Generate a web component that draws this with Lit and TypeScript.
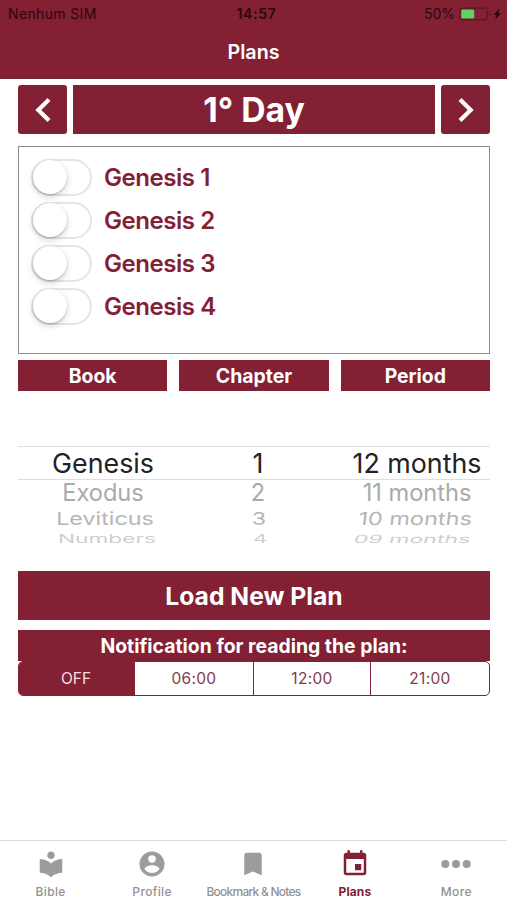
import { LitElement, html, css, svg } from "lit";
import { customElement } from "lit/decorators.js";

const CHAPTERS = ["Genesis 1", "Genesis 2", "Genesis 3", "Genesis 4"];
const WHEEL = [
  ["Genesis", "1", "12 months"],
  ["Exodus", "2", "11 months"],
  ["Leviticus", "3", "10 months"],
  ["Numbers", "4", "09 months"],
];
const TIMES = ["OFF", "06:00", "12:00", "21:00"];
const TABS = [
  { id: "bible", label: "Bible", icon: svg`<path d="M12 11.55C9.64 9.35 6.48 8 3 8v11c3.48 0 6.64 1.35 9 3.55 2.36-2.19 5.52-3.55 9-3.55V8c-3.48 0-6.64 1.35-9 3.55zM12 8c1.66 0 3-1.34 3-3s-1.34-3-3-3-3 1.34-3 3 1.34 3 3 3z"/>` },
  { id: "profile", label: "Profile", icon: svg`<path fill-rule="evenodd" d="M12 2a10 10 0 1 0 0 20 10 10 0 0 0 0-20zm0 3a3 3 0 1 1 0 6 3 3 0 0 1 0-6zm0 14.200c-2.500 0-4.710-1.280-6-3.220.030-1.990 4-3.080 6-3.080s5.970 1.090 6 3.080a7.200 7.200 0 0 1-6 3.220z"/>` },
  { id: "notes", label: "Bookmark & Notes", icon: svg`<path d="M17 3H7c-1.100 0-2 .9-2 2v16l7-3 7 3V5c0-1.100-.9-2-2-2z"/>` },
  { id: "plans", label: "Plans", icon: svg`<path d="M17 12h-5v5h5v-5zM16 1v2H8V1H6v2H5c-1.110 0-2 .9-2 2v14c0 1.100.890 2 2 2h14c1.100 0 2-.9 2-2V5c0-1.100-.9-2-2-2h-1V1h-2zm3 18H5V8h14v11z"/>` },
  { id: "more", label: "More", icon: svg`<circle cx="3.400" cy="12" r="3.200"/><circle cx="12" cy="12" r="3.200"/><circle cx="20.600" cy="12" r="3.200"/>` },
];

@customElement("app-root")
export class AppRoot extends LitElement {
  static styles = css`
    :host { display: flex; flex-direction: column; height: 900px; background: #fff; overflow: hidden;
      font-family: Inter, "Liberation Sans", sans-serif; --wine: #832034; color: var(--wine); }
    * { box-sizing: border-box; }
    .header { flex: none; height: 79px; background: var(--wine); border-bottom: 1px solid #732338; }
    .status { display: grid; grid-template-columns: 1fr auto 1fr; align-items: center; height: 27px;
      padding: 0 5px 0 8px; font-size: 13.5px; color: #2b0710; white-space: nowrap; }
    .carrier { font-size: 14px; letter-spacing: 0.35px; }
    .clock { font-size: 14px; font-weight: 600; letter-spacing: 0.7px; padding-left: 3px; }
    .power { display: flex; justify-content: flex-end; align-items: center; gap: 4px; font-size: 14px; }
    .battery { width: 43px; height: 14px; }
    .title { height: 50px; line-height: 51px; text-align: center; font-size: 19.7px; font-weight: 600; color: #fff; }
    .content { flex: 1; padding: 6px 17px 0 18px; }
    .day { display: flex; gap: 6px; height: 49px; }
    .nav { width: 49px; border-radius: 3px; background: var(--wine); display: flex; align-items: center; justify-content: center; }
    .nav svg { width: 16px; height: 26px; fill: none; stroke: #fff; stroke-width: 4.2; }
    .dayname { flex: 1; background: var(--wine); color: #fff; font-size: 33.7px; font-weight: 700; line-height: 49px; text-align: center; }
    .list { margin-top: 12px; height: 208px; border: 1px solid #8b8b8b; padding: 9.4px 12px; }
    .item { display: flex; align-items: center; height: 42.8px; gap: 12px; font-size: 24px; font-weight: 600; letter-spacing: -.45px; }
    .switch { width: 61px; height: 37px; border: 2px solid #e5e5e5; border-radius: 19px; }
    .knob { width: 34px; height: 34px; margin-top: -1px; border-radius: 50%; background: #fff; box-shadow: 0 3px 7px rgba(0,0,0,.16), 0 1px 2px rgba(0,0,0,.2); }
    .heads { display: grid; grid-template-columns: repeat(3, 1fr); gap: 12px; margin-top: 6px; }
    .head { height: 31px; line-height: 32px; text-align: center; background: var(--wine); color: #fff; font-size: 19.4px; font-weight: 700; }
    .wheel { height: 180px; padding-top: 55px; }
    .turn { display: grid; grid-template-columns: 170px 140px 178px; margin-right: -16px; align-items: center; justify-items: center; white-space: nowrap; color: #aaa; }
    .cell { line-height: 1; }
    .t0 { height: 34px; font-size: 26.8px; color: #222; border: solid #dedede; border-width: 1px 0; margin-right: 0; width: 472px; }
    .t1 { height: 26px; font-size: 23.6px; }
    .t2 { height: 25px; font-size: 23.3px; color: #b5b5b5; }
    .t3 { height: 13px; font-size: 22.7px; color: #cfcfcf; }
    .t2 .cell { transform: translateX(1px) scaleY(.77); }
    .t3 .cell { transform: translate(2px, -3px) scaleY(.5); }
    .t2 .cell:first-child { transform: translateX(2px) scaleY(.77); }
    .t3 .cell:first-child { transform: translate(4px, -3px) scaleY(.5); }
    .t2 .cell:last-child { transform: translateX(-2px) scale(1.01, .77) skewX(-5deg); }
    .t3 .cell:last-child { transform: translate(-5px, -3px) scale(1.02, .5) skewX(-8deg); }
    .load { height: 49px; line-height: 50px; background: var(--wine); color: #fff; text-align: center; font-size: 24.7px; font-weight: 700; }
    .notice { margin-top: 10px; height: 31px; line-height: 32px; background: var(--wine); color: #fff; text-align: center; font-size: 19.4px; font-weight: 700; }
    .segments { display: grid; grid-template-columns: 116px 118px 117px 1fr; height: 35px; border: 1px solid var(--wine); border-radius: 5px; overflow: hidden; font-size: 15.5px; color: #843a4d; }
    .seg { text-align: center; line-height: 34px; border-left: 1px solid var(--wine); letter-spacing: .3px; }
    .seg.on { background: var(--wine); color: #fbdde3; border-left: 0; letter-spacing: 0; padding-right: 2px; }
    .seg.on + .seg { border-left: 0; }
    .tabs { flex: none; height: 60px; border-top: 1px solid #dcdcdc; display: grid; grid-template-columns: repeat(5, 1fr); color: #929292; }
    .tab { display: flex; flex-direction: column; align-items: center; font-size: 12px; font-weight: 500; letter-spacing: .35px; white-space: nowrap; }
    .icon { width: 30px; height: 30px; margin-top: 8px; fill: #9c9c9c; overflow: visible; }
    .caption { margin-top: 5px; line-height: 16px; }
    .plans { color: var(--wine); font-weight: 700; letter-spacing: .1px; }
    .plans .icon { fill: var(--wine); }
    .notes { letter-spacing: -.75px; }
  `;

  render() {
    return html`
      <div class="header">
        <div class="status">
          <span class="carrier">Nenhum SIM</span><span class="clock">14:57</span>
          <span class="power"><span>50%</span>
            <svg class="battery" viewBox="0 0 43 14">
              <rect x=".8" y="1.100" width="27.500" height="11.800" rx="3" fill="none" stroke="#5b1525" stroke-width="1.100"/>
              <rect x="2.200" y="2.500" width="13" height="9" rx="1.500" fill="#5fd35f"/>
              <path d="M30 5v4q1.500-.6 1.500-2T30 5" fill="#5b1525"/>
              <path d="M40.500 1.500 34.500 8h3l-1.500 4.700L42 6.200h-3z" fill="#230710"/>
            </svg></span>
        </div>
        <div class="title">Plans</div>
      </div>
      <div class="content">
        <div class="day">
          <div class="nav"><svg viewBox="0 0 16 26"><path d="M14 2.500 3.300 13 14 23.500"/></svg></div>
          <div class="dayname">1° Day</div>
          <div class="nav"><svg viewBox="0 0 16 26"><path d="M2 2.500 12.700 13 2 23.500"/></svg></div>
        </div>
        <div class="list">
          ${CHAPTERS.map((c) => html`<div class="item"><div class="switch"><div class="knob"></div></div><span>${c}</span></div>`)}
        </div>
        <div class="heads">${["Book", "Chapter", "Period"].map((h) => html`<div class="head">${h}</div>`)}</div>
        <div class="wheel">
          ${WHEEL.map((r, i) => html`<div class="turn t${i}">${r.map((c) => html`<span class="cell">${c}</span>`)}</div>`)}
        </div>
        <div class="load">Load New Plan</div>
        <div class="notice">Notification for reading the plan:</div>
        <div class="segments">${TIMES.map((t, i) => html`<div class="seg ${i === 0 ? "on" : ""}">${t}</div>`)}</div>
      </div>
      <div class="tabs">
        ${TABS.map((t) => html`<div class="tab ${t.id}"><svg class="icon" viewBox="0 0 24 24">${t.icon}</svg><span class="caption">${t.label}</span></div>`)}
      </div>
    `;
  }
}
